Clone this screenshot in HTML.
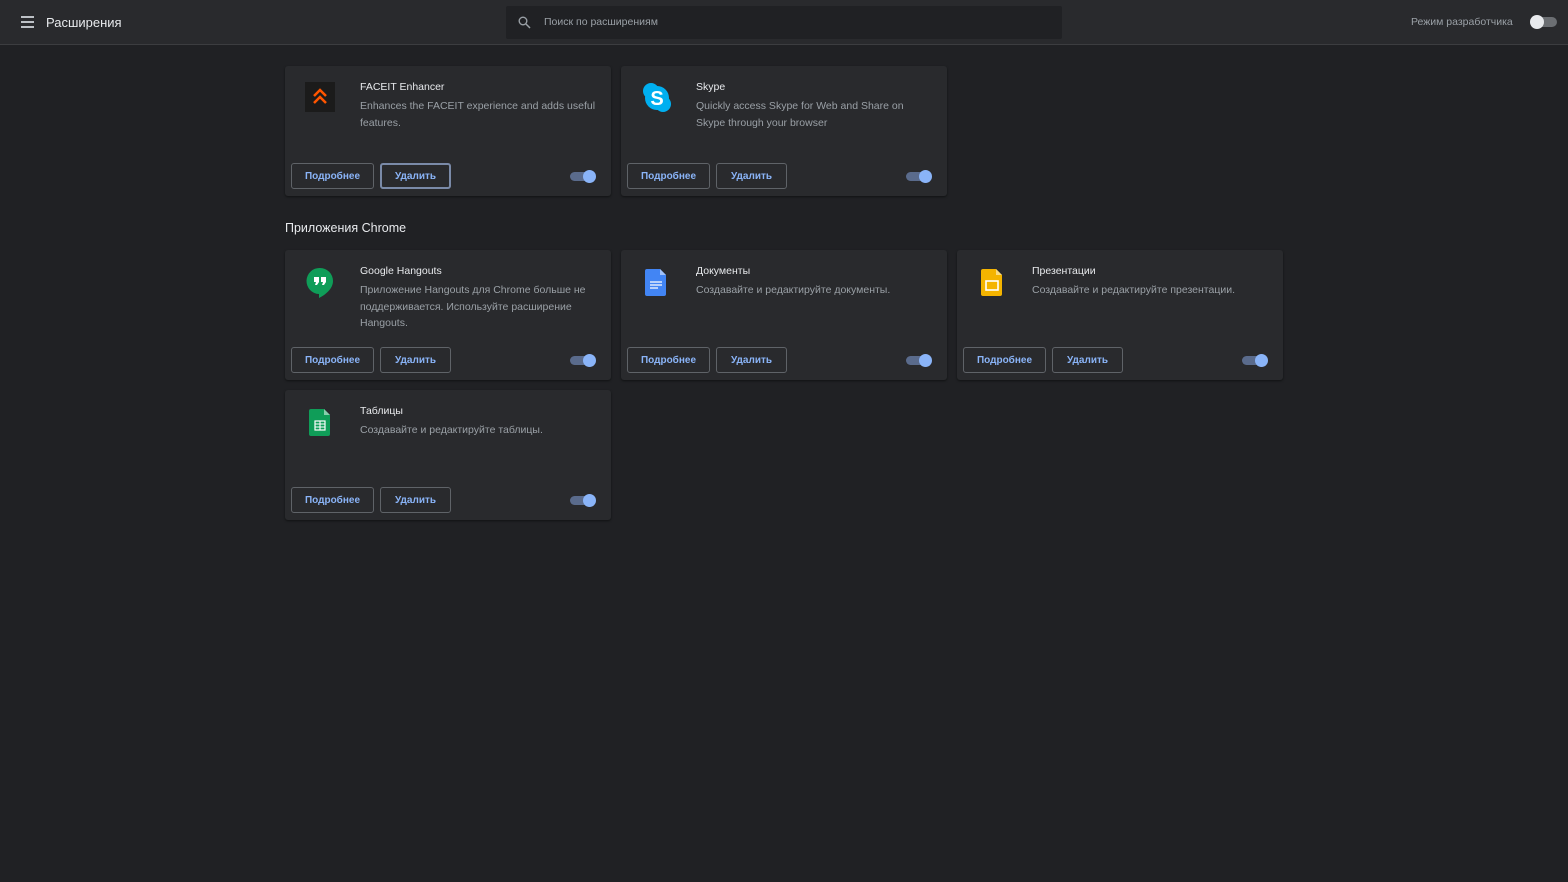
<!DOCTYPE html>
<html><head><meta charset="utf-8"><style>
*{box-sizing:border-box;margin:0;padding:0}
body{width:1568px;height:882px;background:#202124;font-family:"Liberation Sans",sans-serif;color:#e8eaed;position:relative;overflow:hidden}
.hdr{position:absolute;left:0;top:0;width:1568px;height:45px;background:#292a2d;border-bottom:1px solid #3c3d40}
.menu{position:absolute;left:21px;top:16px;width:13px}
.menu i{display:block;height:2px;background:#bdc1c6;margin-bottom:3px}
.ttl{position:absolute;left:46px;top:15px;font-size:13px;color:#e8eaed}
.search{position:absolute;left:506px;top:6px;width:556px;height:33px;background:#202124;border-radius:2px}
.search span{position:absolute;left:38px;top:10px;font-size:10.5px;color:#9aa0a6}
.dev{position:absolute;left:1411px;top:16px;font-size:10.5px;color:#9aa0a6}
.dtog{position:absolute;left:1531px;top:17px;width:26px;height:10px;border-radius:5px;background:#6b6e72}
.dtog:after{content:"";position:absolute;left:-1px;top:-2px;width:14px;height:14px;border-radius:50%;background:#e8eaed}
.card{position:absolute;width:326px;height:130px;background:#292a2d;border-radius:3px;box-shadow:0 1px 2px rgba(0,0,0,.5)}
.card .ic{position:absolute;left:20px;top:16px;width:30px;height:32px}
.card h3{position:absolute;left:75px;top:15px;font-size:10.5px;font-weight:normal;color:#e8eaed}
.card p{position:absolute;left:75px;top:32px;width:232px;font-size:10.5px;line-height:16.5px;color:#9aa0a6}
.b{position:absolute;top:97px;height:26px;border:1px solid #5f6368;border-radius:3px;font-size:10px;font-weight:bold;color:#8ab4f8;text-align:center;line-height:26px}
.b1{left:6px;width:83px}
.b2{left:95px;width:71px}
.b2.f{border:2px solid #7a8aa8;line-height:24px}
.tg{position:absolute;left:285px;top:106px;width:24px;height:9px;border-radius:5px;background:#5a6b8c}
.tg:after{content:"";position:absolute;right:-2px;top:-2px;width:13px;height:13px;border-radius:50%;background:#8ab4f8}
.sec{position:absolute;left:285px;top:221px;font-size:12.5px;color:#e8eaed}
</style></head><body>
<div class="hdr">
<div class="menu"><i></i><i></i><i></i></div>
<div class="ttl">Расширения</div>
<div class="search"><svg style="position:absolute;left:12px;top:10px" width="13" height="13" viewBox="0 0 13 13"><circle cx="5" cy="5" r="3.8" fill="none" stroke="#9aa0a6" stroke-width="1.4"/><path d="M8 8l4 4" stroke="#9aa0a6" stroke-width="1.5"/></svg><span>Поиск по расширениям</span></div>
<div class="dev">Режим разработчика</div><div class="dtog"></div>
</div>

<div class="card" style="left:285px;top:66px">
<div class="ic" style="background:#1b1b1b;left:20px;top:16px;width:30px;height:30px"><svg width="30" height="30" viewBox="0 0 30 30"><path d="M9 14l6-6 6 6M9 21l6-6 6 6" fill="none" stroke="#ff5500" stroke-width="2.5"/></svg></div>
<h3>FACEIT Enhancer</h3><p style="width:240px">Enhances the FACEIT experience and adds useful features.</p>
<div class="b b1">Подробнее</div><div class="b b2 f">Удалить</div><div class="tg"></div></div>

<div class="card" style="left:621px;top:66px">
<div class="ic"><svg width="32" height="32" viewBox="0 0 32 32"><circle cx="10" cy="9" r="8" fill="#00aff0"/><circle cx="22" cy="22" r="8" fill="#00aff0"/><circle cx="16" cy="16" r="12" fill="#00aff0"/><text x="16" y="23" font-family="Liberation Sans" font-weight="bold" font-size="20" fill="#fff" text-anchor="middle">S</text></svg></div>
<h3>Skype</h3><p>Quickly access Skype for Web and Share on Skype through your browser</p>
<div class="b b1">Подробнее</div><div class="b b2">Удалить</div><div class="tg"></div></div>

<div class="sec">Приложения Chrome</div>

<div class="card" style="left:285px;top:250px">
<div class="ic"><svg width="30" height="32" viewBox="0 0 30 32"><path d="M15 2a13 13 0 0 0-1 26v4c6-3 14-9 14-17A13 13 0 0 0 15 2z" fill="#0f9d58"/><path d="M9 11h5v5l-2 3h-2l1-3H9zM16 11h5v5l-2 3h-2l1-3h-2z" fill="#fff"/></svg></div>
<h3>Google Hangouts</h3><p>Приложение Hangouts для Chrome больше не поддерживается. Используйте расширение Hangouts.</p>
<div class="b b1">Подробнее</div><div class="b b2">Удалить</div><div class="tg"></div></div>

<div class="card" style="left:621px;top:250px">
<div class="ic"><svg width="30" height="32" viewBox="0 0 30 32"><path d="M6 3h13l6 6v19a2 2 0 0 1-2 2H6a2 2 0 0 1-2-2V5a2 2 0 0 1 2-2z" fill="#4285f4"/><path d="M19 3v6h6z" fill="#a1c2fa"/><path d="M9 16h12M9 19h12M9 22h8" stroke="#fff" stroke-width="1.3"/></svg></div>
<h3>Документы</h3><p>Создавайте и редактируйте документы.</p>
<div class="b b1">Подробнее</div><div class="b b2">Удалить</div><div class="tg"></div></div>

<div class="card" style="left:957px;top:250px">
<div class="ic"><svg width="30" height="32" viewBox="0 0 30 32"><path d="M6 3h13l6 6v19a2 2 0 0 1-2 2H6a2 2 0 0 1-2-2V5a2 2 0 0 1 2-2z" fill="#f4b400"/><path d="M19 3v6h6z" fill="#fadb80"/><rect x="9" y="15" width="12" height="9" fill="none" stroke="#fff" stroke-width="1.6"/></svg></div>
<h3>Презентации</h3><p style="width:245px">Создавайте и редактируйте презентации.</p>
<div class="b b1">Подробнее</div><div class="b b2">Удалить</div><div class="tg"></div></div>

<div class="card" style="left:285px;top:390px">
<div class="ic"><svg width="30" height="32" viewBox="0 0 30 32"><path d="M6 3h13l6 6v19a2 2 0 0 1-2 2H6a2 2 0 0 1-2-2V5a2 2 0 0 1 2-2z" fill="#0f9d58"/><path d="M19 3v6h6z" fill="#87ceac"/><rect x="10" y="15" width="10" height="9" fill="none" stroke="#fff" stroke-width="1.2"/><path d="M10 18h10M10 21h10M15 15v9" stroke="#fff" stroke-width="1.1"/></svg></div>
<h3>Таблицы</h3><p>Создавайте и редактируйте таблицы.</p>
<div class="b b1">Подробнее</div><div class="b b2">Удалить</div><div class="tg"></div></div>
</body></html>
